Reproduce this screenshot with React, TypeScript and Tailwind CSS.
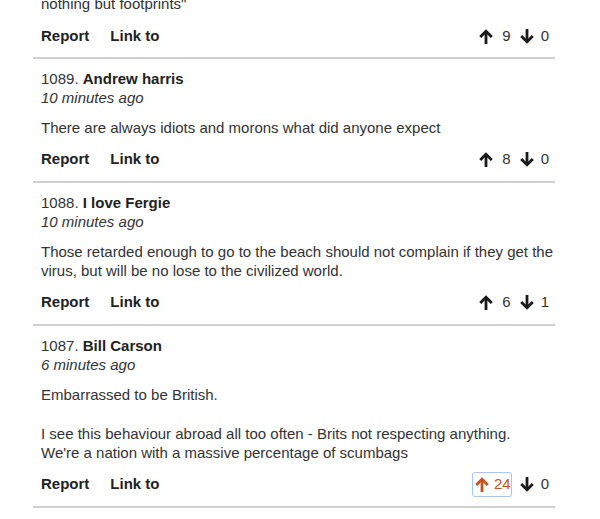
type Comment = {
  n: number
  name: string
  time: string
  body: string[][]
  up: number
  down: number
  voted?: boolean
}

const COMMENTS: Comment[] = [
  {
    n: 1089,
    name: 'Andrew harris',
    time: '10 minutes ago',
    body: [['There are always idiots and morons what did anyone expect']],
    up: 8,
    down: 0,
  },
  {
    n: 1088,
    name: 'I love Fergie',
    time: '10 minutes ago',
    body: [
      [
        'Those retarded enough to go to the beach should not complain if they get the virus, but will be no lose to the civilized world.',
      ],
    ],
    up: 6,
    down: 1,
  },
  {
    n: 1087,
    name: 'Bill Carson',
    time: '6 minutes ago',
    body: [
      ['Embarrassed to be British.'],
      ['I see this behaviour abroad all too often - Brits not respecting anything.', "We're a nation with a massive percentage of scumbags"],
    ],
    up: 24,
    down: 0,
    voted: true,
  },
]

function Arrow({ down, color }: { down?: boolean; color: string }) {
  return (
    <svg
      width="14"
      height="15"
      viewBox="0 0 14 15"
      className={down ? 'rotate-180' : ''}
      fill="none"
      stroke={color}
      strokeWidth="2.8"
      strokeLinejoin="miter"
    >
      <path d="M7 15V2.5" />
      <path d="M1.2 8L7 2.2L12.8 8" />
    </svg>
  )
}

function Actions({ up, down, voted }: { up: number; down: number; voted?: boolean }) {
  return (
    <div className="flex items-center justify-between mt-[12px] h-5">
      <div className="flex items-center gap-[21px] font-bold text-[15px] text-[#222]">
        <span>Report</span>
        <span>Link to</span>
      </div>
      <div className="flex items-center text-[15px]">
        <span
          className={
            voted
              ? 'flex items-center gap-[5px] pl-[2px] -ml-[2px] rounded-[2px] outline outline-[1.5px] outline-[#a6c6f4] text-[#c5531f]'
              : 'flex items-center gap-[9px] text-[#333]'
          }
        >
          <Arrow color={voted ? '#c5531f' : '#1a1a1a'} />
          <span>{up}</span>
        </span>
        <span className="flex items-center gap-[7px] ml-[9px] mr-[-2px] text-[#333]">
          <Arrow down color="#1a1a1a" />
          <span>{down}</span>
        </span>
      </div>
    </div>
  )
}

export default function App() {
  return (
    <main
      className="min-h-screen bg-white text-[#333] overflow-hidden"
      style={{ fontFamily: '"Liberation Sans", Arial, sans-serif' }}
    >
      <div className="ml-[33px] w-[522px]">
        <div className="px-2 pb-[11px] border-b-2 border-[#d0d0d0]">
          <p className="-mt-[6px] text-[15px] leading-5">nothing but footprints"</p>
          <Actions up={9} down={0} />
        </div>

        {COMMENTS.map((c) => (
          <div key={c.n} className="px-2 pt-[10px] pb-[11px] border-b-2 border-[#d0d0d0]">
            <div className="text-[15px] leading-[19px]">
              {c.n}. <span className="font-bold text-[#222]">{c.name}</span>
            </div>
            <div className="text-[15px] leading-[19px] italic">{c.time}</div>
            <div className="mt-[11px] -mr-3 text-[15px] leading-[19.5px]">
              {c.body.map((lines, i) => (
                <p key={i} className={i > 0 ? 'mt-[19.5px]' : ''}>
                  {lines.map((l, j) => (
                    <span key={j}>
                      {j > 0 && <br />}
                      {l}
                    </span>
                  ))}
                </p>
              ))}
            </div>
            <Actions up={c.up} down={c.down} voted={c.voted} />
          </div>
        ))}
      </div>
    </main>
  )
}
